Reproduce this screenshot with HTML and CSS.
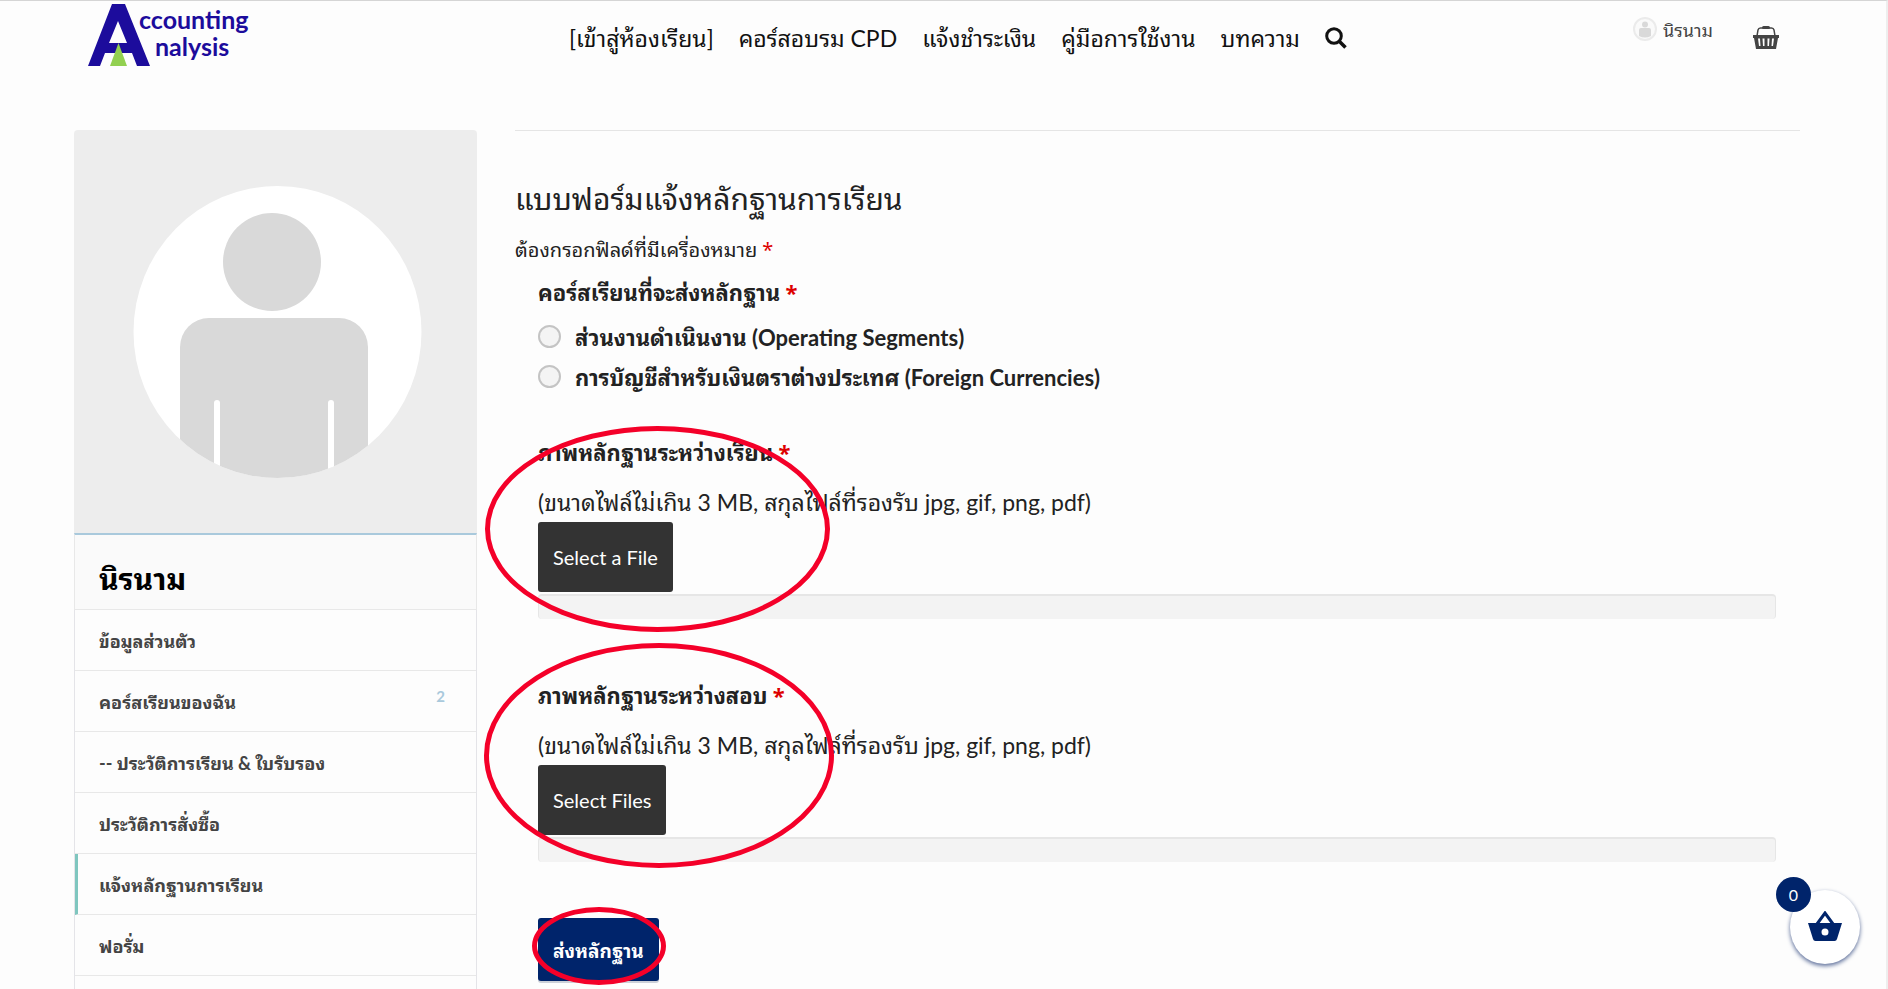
FILE: index.html
```html
<!DOCTYPE html>
<html lang="th">
<head>
  <meta charset="utf-8">
  <title>แจ้งหลักฐานการเรียน</title>
  <link rel="stylesheet" href="styles.css">
</head>
<body>
  <header class="site-header">
    <a class="logo" href="#">
      <svg width="170" height="66" viewBox="0 0 170 66">
        <path d="M25 3h13l25 62H50l-5-13H18l-5 13H1zM31 20l-9 22h18z" fill="#1c0c9c" fill-rule="evenodd"/>
        <path d="M31.500 42l8.500 23H23z" fill="#92d050"/>
        <text class="logo-text" x="52" y="28">ccounting</text>
        <text class="logo-text" x="68" y="55">nalysis</text>
      </svg>
    </a>
    <nav class="main-nav">
      <a href="#">[เข้าสู่ห้องเรียน]</a>
      <a href="#">คอร์สอบรม CPD</a>
      <a href="#">แจ้งชำระเงิน</a>
      <a href="#">คู่มือการใช้งาน</a>
      <a href="#">บทความ</a>
      <button class="search-btn" type="button" aria-label="ค้นหา">
        <svg width="22" height="22" viewBox="0 0 22 22" fill="none" stroke="#111">
          <circle cx="9" cy="9" r="7.300" stroke-width="3"/>
          <path d="M14.500 14.500l6 6" stroke-width="3.600"/>
        </svg>
      </button>
    </nav>
    <div class="user-tools">
      <a class="user-link" href="#">
        <svg width="24" height="24" viewBox="0 0 24 24">
          <circle cx="12" cy="12" r="11" fill="#fafafa" stroke="#ebebeb" stroke-width="2"/>
          <circle cx="12" cy="7.500" r="3" fill="#d9d9d9"/>
          <path d="M6 13a2 2 0 0 1 2-2h8a2 2 0 0 1 2 2v6q-6 3-12 0z" fill="#d9d9d9"/>
        </svg>
        <span>นิรนาม</span>
      </a>
      <a class="cart-link" href="#" aria-label="ตะกร้า">
        <svg width="26" height="24" viewBox="0 0 26 24">
          <path d="M4 11l1-6q.5-2 2.500-2h11q2 0 2.500 2l1 6" fill="none" stroke="#444" stroke-width="1.500"/>
          <rect x="9" y="1" width="8" height="3" rx="1.500" fill="#444"/>
          <path d="M0 10h26v3h-1l-2 11H3L1 13H0zM5 13.500l1 7.500h1.500l-.5-7.500zM9.500 13.500l.5 7.500h1.500v-7.500zM14.500 13.500v7.500H16l.5-7.500zM19 13.500l-.5 7.500H20l1-7.500z" fill="#444" fill-rule="evenodd"/>
        </svg>
      </a>
    </div>
  </header>

  <div class="page">
    <aside class="sidebar">
      <svg class="avatar" viewBox="0 0 403 403" preserveAspectRatio="none">
        <defs>
          <clipPath id="avatar-clip"><ellipse cx="203.500" cy="202" rx="144" ry="146"/></clipPath>
        </defs>
        <rect width="403" height="403" fill="#ededed"/>
        <g clip-path="url(#avatar-clip)">
          <rect width="403" height="403" fill="#fff"/>
          <circle cx="198" cy="132" r="49" fill="#d9d9d9"/>
          <rect x="106" y="188" width="188" height="240" rx="29" fill="#d9d9d9"/>
          <rect x="140" y="270" width="6" height="100" rx="3" fill="#fff"/>
          <rect x="254" y="270" width="6" height="100" rx="3" fill="#fff"/>
        </g>
      </svg>
      <h2 class="profile-name">นิรนาม</h2>
      <ul class="profile-menu">
        <li><a href="#">ข้อมูลส่วนตัว</a></li>
        <li><a href="#">คอร์สเรียนของฉัน <span class="count">2</span></a></li>
        <li><a href="#">-- ประวัติการเรียน &amp; ใบรับรอง</a></li>
        <li><a href="#">ประวัติการสั่งซื้อ</a></li>
        <li class="active"><a href="#">แจ้งหลักฐานการเรียน</a></li>
        <li><a href="#">ฟอรั่ม</a></li>
      </ul>
    </aside>

    <main class="content">
      <h1>แบบฟอร์มแจ้งหลักฐานการเรียน</h1>
      <p class="hint">ต้องกรอกฟิลด์ที่มีเครื่องหมาย <span class="required">*</span></p>
      <form class="evidence-form">
        <fieldset class="courses">
          <legend>คอร์สเรียนที่จะส่งหลักฐาน <span class="required">*</span></legend>
          <label class="choice"><input type="radio" name="course"> <span>ส่วนงานดำเนินงาน (Operating Segments)</span></label>
          <label class="choice"><input type="radio" name="course"> <span>การบัญชีสำหรับเงินตราต่างประเทศ (Foreign Currencies)</span></label>
        </fieldset>

        <div class="upload">
          <label for="study-file">ภาพหลักฐานระหว่างเรียน <span class="required">*</span></label>
          <p>(ขนาดไฟล์ไม่เกิน 3 MB, สกุลไฟล์ที่รองรับ jpg, gif, png, pdf)</p>
          <button id="study-file" class="select-btn" type="button">Select a File</button>
          <div class="file-bar"></div>
          <div class="ring ring-study"></div>
        </div>

        <div class="upload">
          <label for="exam-files">ภาพหลักฐานระหว่างสอบ <span class="required">*</span></label>
          <p>(ขนาดไฟล์ไม่เกิน 3 MB, สกุลไฟล์ที่รองรับ jpg, gif, png, pdf)</p>
          <button id="exam-files" class="select-btn" type="button">Select Files</button>
          <div class="file-bar"></div>
          <div class="ring ring-exam"></div>
        </div>

        <div class="submit-row">
          <button class="submit-btn" type="submit">ส่งหลักฐาน</button>
          <div class="ring ring-submit"></div>
        </div>
      </form>
    </main>
  </div>

  <button class="float-cart" type="button" aria-label="ตะกร้าสินค้า">
    <svg width="36" height="32" viewBox="0 0 36 32">
      <path d="M10 13l8-11 8 11" fill="none" stroke="#00246b" stroke-width="3"/>
      <path d="M1 12h34l-5 16q-.5 2-2.500 2H8.500Q6.500 30 6 28zM18 17.500a3.500 3.500 0 1 0 0 7 3.500 3.500 0 1 0 0-7z" fill="#00246b" fill-rule="evenodd"/>
    </svg>
    <span class="float-count">0</span>
  </button>
</body>
</html>
```
FILE: styles.css
```css
* {
  box-sizing: border-box;
}

body {
  margin: 0;
  height: 100vh;
  overflow: hidden;
  background: #fdfdfd;
  border-top: 1px solid #d5d5d5;
  border-right: 2px solid #eee;
  color: #222;
  font-family: Lato, "Noto Sans Thai Looped", "Noto Sans Thai", "Noto Sans", sans-serif;
  font-size: 23px;
}

a {
  color: inherit;
  text-decoration: none;
}

button {
  font-family: inherit;
  cursor: pointer;
}

/* header */
.site-header {
  display: flex;
  height: 129px;
  padding: 0 107px 0 87px;
}

.logo-text {
  font-family: Lato, sans-serif;
  font-size: 25px;
  font-weight: bold;
  fill: #1c0c9c;
}

.main-nav {
  display: flex;
  align-items: center;
  gap: 25px;
  height: 70px;
  margin-left: 312px;
  color: #111;
  white-space: nowrap;
}

.search-btn {
  display: flex;
  padding: 4px 0 0;
  border: 0;
  background: none;
}

.user-tools {
  display: flex;
  gap: 40px;
  margin-left: auto;
}

.user-link {
  display: flex;
  align-items: center;
  gap: 6px;
  height: 56px;
  font-size: 18px;
  color: #444;
}

.cart-link {
  padding-top: 24px;
}

/* columns */
.page {
  display: flex;
  gap: 38px;
  padding: 0 86px 0 74px;
}

.sidebar {
  flex: 0 0 403px;
}

.avatar {
  display: block;
  width: 100%;
  height: 403px;
  border-radius: 4px 4px 0 0;
}

.profile-name {
  display: flex;
  align-items: center;
  height: 77px;
  margin: 0;
  padding: 8px 24px 0;
  border: 1px solid #e8e8e8;
  border-top: 2px solid #a9c9dc;
  background: #fafafa;
  color: #000;
  font-size: 30px;
}

.profile-menu {
  margin: 0;
  padding: 0 0 61px;
  border: 1px solid #e4e4e8;
  border-top: 0;
  list-style: none;
}

.profile-menu a {
  display: flex;
  justify-content: space-between;
  height: 61px;
  padding: 0 31px 0 24px;
  border-bottom: 1px solid #e8e8e8;
  color: #444;
  font-size: 18px;
  font-weight: bold;
  line-height: 62px;
}

.profile-menu .active a {
  padding-left: 21px;
  border-left: 3px solid #7fc6bf;
}

.profile-menu .count {
  color: #a9c9dc;
  font-size: 15px;
  line-height: 50px;
}

.content {
  flex: 1;
  border-top: 1px solid #e5e5e5;
}

.content h1 {
  margin: 45px 0 0;
  font-size: 30px;
  font-weight: normal;
  line-height: 44px;
}

.hint {
  margin: 14px 0 0;
  font-size: 20px;
  line-height: 30px;
}

.required {
  color: #d00;
  font-family: "Noto Sans", sans-serif;
}

/* form */
.evidence-form {
  padding: 7px 24px 0 23px;
}

.courses {
  height: 160px;
  margin: 0;
  padding: 0;
  border: 0;
}

.courses legend,
.upload label {
  display: block;
  height: 40px;
  padding: 0;
  font-size: 22px;
  font-weight: bold;
  line-height: 40px;
}

.courses legend {
  margin-bottom: 4px;
}

.choice {
  display: flex;
  align-items: center;
  gap: 14px;
  height: 40px;
  font-size: 22px;
  font-weight: bold;
}

.choice input {
  appearance: none;
  width: 23px;
  height: 23px;
  margin: 0;
  border: 2px solid #c4c4c4;
  border-radius: 50%;
  background: #f4f4f4;
}

.upload {
  position: relative;
  height: 243px;
}

.upload p {
  margin: 10px 0 0;
  line-height: 40px;
}

.select-btn {
  display: block;
  height: 70px;
  padding: 0 15px;
  border: 0;
  border-radius: 3px;
  background: #333;
  color: #fff;
  font-size: 20px;
}

.file-bar {
  height: 25px;
  margin-top: 2px;
  border: 1px solid #e6e6e6;
  border-top-width: 2px;
  border-bottom: 0;
  border-radius: 4px;
  background: #f3f3f3;
}

.submit-row {
  position: relative;
}

.submit-btn {
  height: 63px;
  padding: 0 15px;
  border: 0;
  border-radius: 3px;
  background: #00246b;
  box-shadow: 0 2px 0 #ccd0d8;
  color: #fff;
  font-size: 19px;
  font-weight: bold;
}

/* red marker rings around the steps */
.ring {
  position: absolute;
  border: 5px solid #f40029;
  border-radius: 50%;
  pointer-events: none;
}

.ring-study {
  top: -6px;
  left: -53px;
  width: 345px;
  height: 206px;
}

.ring-exam {
  top: -32px;
  left: -54px;
  width: 350px;
  height: 225px;
}

.ring-submit {
  top: -11px;
  left: -6px;
  width: 134px;
  height: 78px;
}

/* floating cart */
.float-cart {
  position: fixed;
  right: 28px;
  bottom: 25px;
  display: flex;
  align-items: center;
  justify-content: center;
  width: 70px;
  height: 74px;
  padding: 0;
  border: 0;
  border-radius: 50%;
  background: #fff;
  box-shadow: 0 2px 4px #5a6c98;
}

.float-count {
  position: absolute;
  top: -13px;
  left: -14px;
  width: 35px;
  height: 35px;
  border-radius: 50%;
  background: #00246b;
  color: #fff;
  font-size: 16px;
  line-height: 35px;
}
```
